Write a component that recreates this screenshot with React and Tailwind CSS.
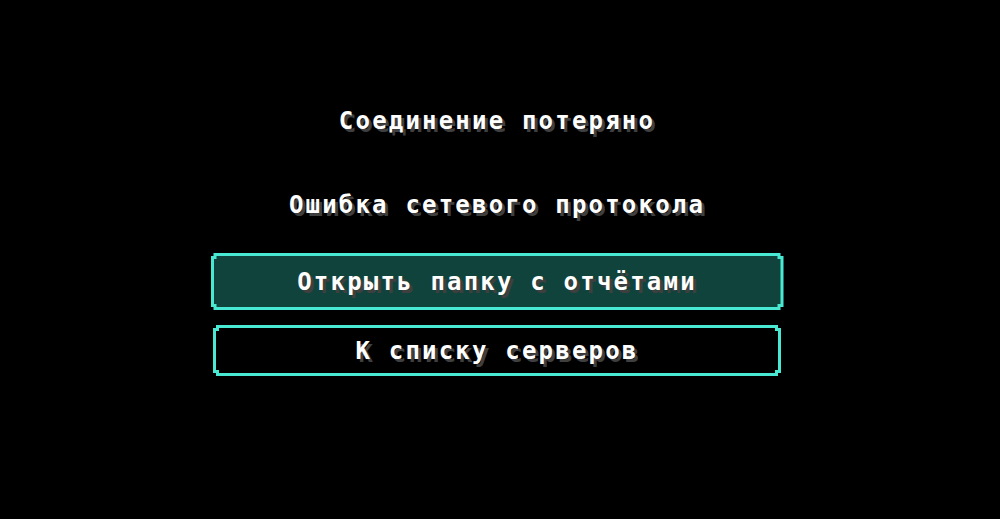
import React from 'react';

// pixel-stepped corners like the game's gui sprites
const notch =
  '[clip-path:polygon(3px_0,calc(100%_-_3px)_0,calc(100%_-_3px)_3px,100%_3px,100%_calc(100%_-_3px),calc(100%_-_3px)_calc(100%_-_3px),calc(100%_-_3px)_100%,3px_100%,3px_calc(100%_-_3px),0_calc(100%_-_3px),0_3px,3px_3px)]';

const Label = ({ children, className = '' }) => (
  <span
    className={`font-['DejaVu_Sans_Mono',monospace] font-bold text-[24px] leading-[30px] tracking-[2.2px] text-white [text-shadow:3px_3px_0_#3f3f3f] whitespace-nowrap ${className}`}
  >
    {children}
  </span>
);

const PixelButton = ({ children, active, size }) => (
  <div className={`${size} ${notch} bg-[#48e8d2] p-[3px]`}>
    <div
      className={`${notch} w-full h-full flex items-center justify-center ${
        active ? 'bg-[#10433b]' : 'bg-black'
      }`}
    >
      <Label>{children}</Label>
    </div>
  </div>
);

const App = () => {
  return (
    <div className="bg-black w-full h-[519px] flex flex-col items-center pt-[106px] pr-[6px]">
      <Label>Соединение потеряно</Label>
      <Label className="mt-[54px]">Ошибка сетевого протокола</Label>

      <div className="mt-[33px] flex flex-col items-center">
        <PixelButton active size="w-[573px] h-[57px]">
          Открыть папку с отчётами
        </PixelButton>
        <div className="mt-[15px]">
          <PixelButton size="w-[568px] h-[51px]">К списку серверов</PixelButton>
        </div>
      </div>
    </div>
  );
};

export default App;
